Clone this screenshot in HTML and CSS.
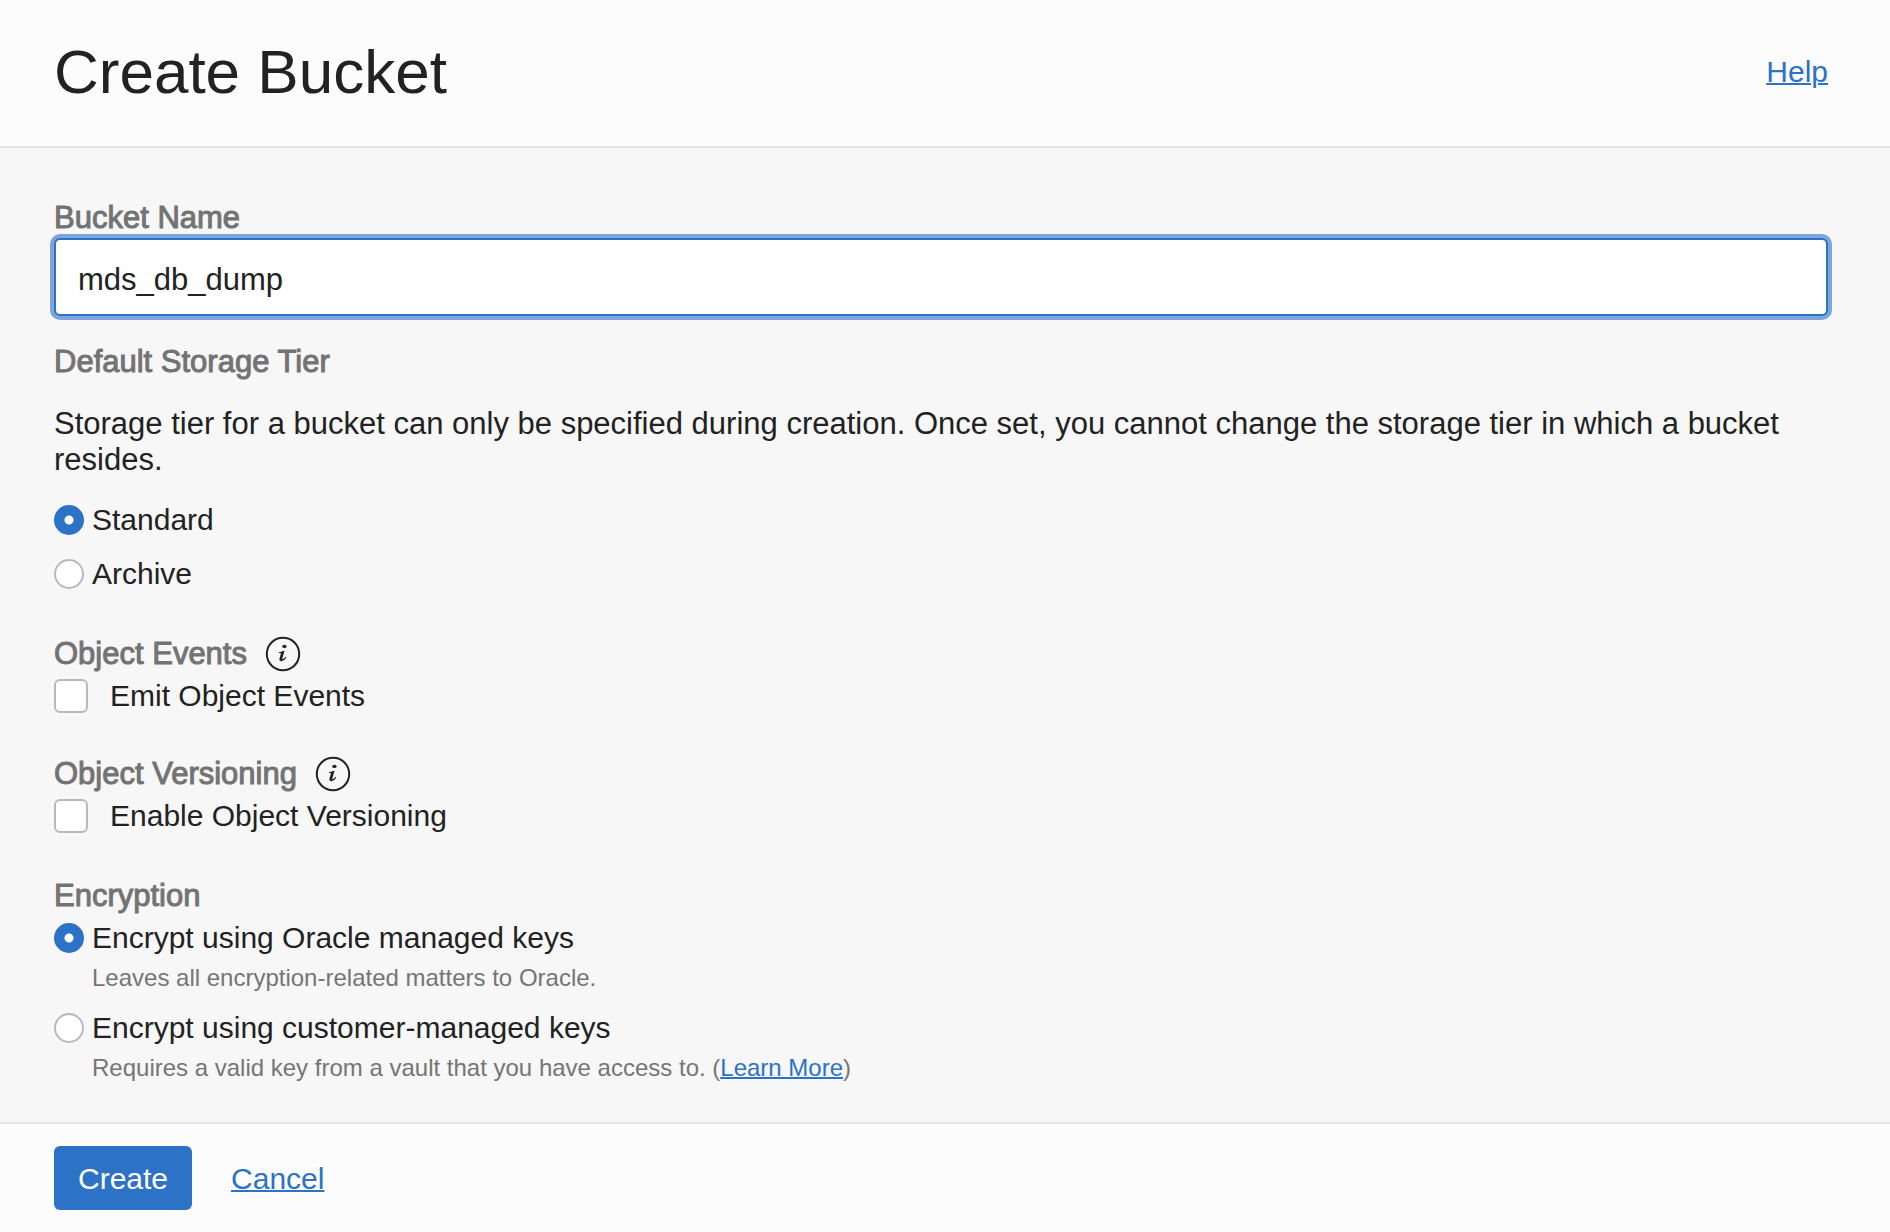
FILE: index.html
```html
<!DOCTYPE html>
<html lang="en">
<head>
<meta charset="utf-8">
<title>Create Bucket</title>
<link rel="stylesheet" href="styles.css">
</head>
<body>
<form class="panel">
  <header class="panel-header">
    <h1 class="title">Create Bucket</h1>
    <a class="link" href="#help">Help</a>
  </header>

  <main class="panel-body">
    <div class="field">
      <label class="heading" for="bucket-name">Bucket Name</label>
      <input class="text-input" id="bucket-name" type="text" value="mds_db_dump">
    </div>

    <section class="tier" role="radiogroup" aria-labelledby="tier-heading">
      <h2 class="heading" id="tier-heading">Default Storage Tier</h2>
      <p class="description">Storage tier for a bucket can only be specified during creation. Once set, you cannot change the storage tier in which a bucket resides.</p>
      <div class="options">
        <label class="radio-row"><input class="radio" type="radio" name="tier" checked>Standard</label>
        <label class="radio-row"><input class="radio" type="radio" name="tier">Archive</label>
      </div>
    </section>

    <div class="object-settings">
      <section class="group">
        <div class="heading-row">
          <h2 class="heading">Object Events</h2>
          <button class="info" type="button" aria-label="About object events">
            <svg viewBox="0 0 36 36" width="36" height="36"><circle cx="18" cy="18" r="16.2"/><path class="stem" d="M14 16.2Q16.8 15.9 19.6 14.5L17.4 22.2Q17.1 23.4 18 23.1Q19.3 22.6 20.6 20.8L21.4 21.4Q19.2 25 16.4 25.2Q13.8 25.2 14.6 22.2L15.9 17.7Q16.1 17 15.3 17L13.8 17Z"/><ellipse class="dot" cx="19.4" cy="10.4" rx="2.2" ry="1.7"/></svg>
          </button>
        </div>
        <label class="check-row"><input class="checkbox" type="checkbox">Emit Object Events</label>
      </section>

      <section class="group">
        <div class="heading-row">
          <h2 class="heading">Object Versioning</h2>
          <button class="info" type="button" aria-label="About object versioning">
            <svg viewBox="0 0 36 36" width="36" height="36"><circle cx="18" cy="18" r="16.2"/><path class="stem" d="M14 16.2Q16.8 15.9 19.6 14.5L17.4 22.2Q17.1 23.4 18 23.1Q19.3 22.6 20.6 20.8L21.4 21.4Q19.2 25 16.4 25.2Q13.8 25.2 14.6 22.2L15.9 17.7Q16.1 17 15.3 17L13.8 17Z"/><ellipse class="dot" cx="19.4" cy="10.4" rx="2.2" ry="1.7"/></svg>
          </button>
        </div>
        <label class="check-row"><input class="checkbox" type="checkbox">Enable Object Versioning</label>
      </section>
    </div>

    <section class="group" role="radiogroup" aria-labelledby="encryption-heading">
      <h2 class="heading" id="encryption-heading">Encryption</h2>
      <div class="options encryption-options">
        <div class="option">
          <label class="radio-row"><input class="radio" type="radio" name="encryption" checked>Encrypt using Oracle managed keys</label>
          <p class="hint">Leaves all encryption-related matters to Oracle.</p>
        </div>
        <div class="option">
          <label class="radio-row"><input class="radio" type="radio" name="encryption">Encrypt using customer-managed keys</label>
          <p class="hint">Requires a valid key from a vault that you have access to. (<a class="link" href="#learn-more">Learn More</a>)</p>
        </div>
      </div>
    </section>
  </main>

  <footer class="panel-footer">
    <button class="primary" type="submit">Create</button>
    <a class="link" href="#cancel">Cancel</a>
  </footer>
</form>
</body>
</html>
```
FILE: styles.css
```css
* {
  box-sizing: border-box;
}

body {
  margin: 0;
  background: #f7f7f7;
  color: #222;
  font-family: "Liberation Sans", Arial, sans-serif;
  font-size: 30px;
  line-height: 36px;
}

h1,
h2,
p {
  margin: 0;
}

.panel {
  display: flex;
  flex-direction: column;
  min-height: 100vh;
}

.panel-header {
  display: flex;
  align-items: center;
  justify-content: space-between;
  padding: 36px 62px 38px 54px;
  border-bottom: 2px solid #e6e6e6;
  background: #fcfcfc;
}

.title {
  font-size: 62px;
  font-weight: 400;
  line-height: 72px;
}

.link {
  color: #2c72c7;
  text-decoration: underline;
  text-decoration-thickness: 2px;
}

.panel-body {
  display: flex;
  flex: 1;
  flex-direction: column;
  gap: 44px;
  padding: 52px 62px 38px 54px;
}

.field,
.group {
  display: flex;
  flex-direction: column;
}

.field {
  gap: 2px;
  margin-bottom: -16px;
}

.group {
  gap: 6px;
}

/* Medium weight: regular letters thickened by a hairline stroke */
.heading {
  color: #737373;
  font-size: 31px;
  font-weight: 400;
  line-height: 36px;
  -webkit-text-stroke: 1px #737373;
}

.text-input {
  width: 100%;
  height: 78px;
  padding: 6px 22px 0;
  border: 2px solid #2c72c7;
  border-radius: 6px;
  outline: none;
  background: #fff;
  box-shadow: 0 0 0 4px #7ea4dc;
  color: inherit;
  font: inherit;
  font-size: 31px;
}

.tier {
  display: flex;
  flex-direction: column;
  gap: 24px;
}

.description {
  padding-top: 2px;
  font-size: 31px;
}

.options {
  display: flex;
  flex-direction: column;
  gap: 18px;
}

.encryption-options {
  gap: 16px;
}

.option {
  display: flex;
  flex-direction: column;
  gap: 6px;
}

.object-settings {
  display: flex;
  flex-direction: column;
  gap: 42px;
}

.radio-row,
.check-row {
  display: flex;
  align-items: center;
  align-self: flex-start;
}

.radio-row {
  gap: 8px;
}

.check-row {
  gap: 22px;
}

.radio,
.checkbox {
  flex: none;
  margin: 0;
  border: 2px solid #b6bac0;
  background: #fff;
  appearance: none;
}

.radio {
  width: 30px;
  height: 30px;
  border-radius: 50%;
}

.radio:checked {
  border-color: #2c72c7;
  background: radial-gradient(circle, #fff 4px, #2c72c7 5px);
}

.checkbox {
  width: 34px;
  height: 34px;
  border-radius: 6px;
}

.heading-row {
  display: flex;
  align-items: center;
  gap: 18px;
}

.info {
  display: flex;
  padding: 0;
  border: 0;
  background: none;
}

.info circle {
  fill: none;
  stroke: #222;
  stroke-width: 2;
}

.info .stem,
.info .dot {
  fill: #222;
}

.hint {
  padding-left: 38px;
  color: #757575;
  font-size: 24px;
  line-height: 32px;
}

.panel-footer {
  display: flex;
  align-items: baseline;
  gap: 39px;
  padding: 22px 54px;
  border-top: 2px solid #e6e6e6;
  background: #fcfcfc;
}

.primary {
  height: 64px;
  padding: 2px 24px 0;
  border: 0;
  border-radius: 6px;
  background: #2c72c7;
  color: #fff;
  font: inherit;
}
```
